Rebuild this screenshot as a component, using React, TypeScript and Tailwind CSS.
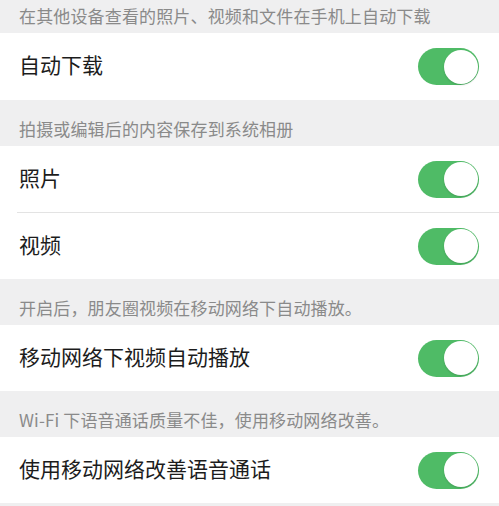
const font = { fontFamily: '"Noto Sans CJK SC", "Noto Sans", sans-serif' };

type Section = { note: string; items: string[]; first?: boolean };

const sections: Section[] = [
  { note: '在其他设备查看的照片、视频和文件在手机上自动下载', items: ['自动下载'], first: true },
  { note: '拍摄或编辑后的内容保存到系统相册', items: ['照片', '视频'] },
  { note: '开启后，朋友圈视频在移动网络下自动播放。', items: ['移动网络下视频自动播放'] },
  { note: 'Wi-Fi 下语音通话质量不佳，使用移动网络改善。', items: ['使用移动网络改善语音通话'] },
];

function Toggle() {
  return (
    <div className="flex h-[37px] w-[61px] items-center justify-end rounded-full bg-[#4fbb66] p-[1.5px]">
      <div className="h-[34px] w-[34px] rounded-full bg-white shadow-[0_1px_2px_rgba(0,0,0,0.15)]" />
    </div>
  );
}

export default function App() {
  return (
    <div className="w-[499px] h-[506px] overflow-hidden bg-[#efeff0]" style={font}>
      {sections.map((section, i) => (
        <div key={i}>
          <div
            className={`${
              section.first ? 'h-[33px] pb-[5px]' : 'h-[46px] pb-[5px]'
            } flex items-end pl-[19px] text-[17px] leading-[24px] tracking-[0.15px] text-[#8a8a8a]`}
          >
            {section.note}
          </div>
          <div className="bg-white">
            {section.items.map((item, j) => (
              <div key={item}>
                {j > 0 && <div className="ml-[17px] h-px bg-[#e3e3e3]" />}
                <div
                  className={`${
                    section.first ? 'h-[67px]' : 'h-[66px]'
                  } flex items-center justify-between pl-[19px] pr-[20px]`}
                >
                  <span className="pb-[5px] text-[21px] leading-[28px] text-[#1c1c1c]">{item}</span>
                  <Toggle />
                </div>
              </div>
            ))}
          </div>
        </div>
      ))}
    </div>
  );
}
